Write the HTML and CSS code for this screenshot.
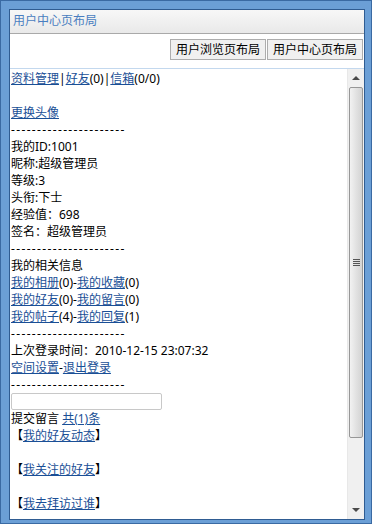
FILE: index.html
```html
<!DOCTYPE html>
<html lang="zh-CN">
<head>
<meta charset="utf-8">
<title>用户中心页布局</title>
<link rel="stylesheet" href="styles.css">
</head>
<body>
<div class="window">
  <div class="panel">
    <div class="header">用户中心页布局</div>
    <div class="toolbar">
      <button class="btn">用户浏览页布局</button>
      <button class="btn">用户中心页布局</button>
    </div>
    <div class="frame">
      <div class="content">
        <div class="line"><a href="#">资料管理</a>|<a href="#">好友</a>(0)|<a href="#">信箱</a>(0/0)</div>
        <div class="line"></div>
        <div class="line"><a href="#">更换头像</a></div>
        <div class="line dash">----------------------</div>
        <div class="line">我的ID:1001</div>
        <div class="line">昵称:超级管理员</div>
        <div class="line">等级:3</div>
        <div class="line">头衔:下士</div>
        <div class="line">经验值：698</div>
        <div class="line">签名：超级管理员</div>
        <div class="line dash">----------------------</div>
        <div class="line">我的相关信息</div>
        <div class="line"><a href="#">我的相册</a>(0)-<a href="#">我的收藏</a>(0)</div>
        <div class="line"><a href="#">我的好友</a>(0)-<a href="#">我的留言</a>(0)</div>
        <div class="line"><a href="#">我的帖子</a>(4)-<a href="#">我的回复</a>(1)</div>
        <div class="line dash">----------------------</div>
        <div class="line">上次登录时间：2010-12-15 23:07:32</div>
        <div class="line"><a href="#">空间设置</a>-<a href="#">退出登录</a></div>
        <div class="line dash">----------------------</div>
        <div class="line"><input class="msg" type="text"></div>
        <div class="line">提交留言 <a href="#">共(1)条</a></div>
        <div class="line">【<a href="#">我的好友动态</a>】</div>
        <div class="line"></div>
        <div class="line">【<a href="#">我关注的好友</a>】</div>
        <div class="line"></div>
        <div class="line">【<a href="#">我去拜访过谁</a>】</div>
      </div>
      <div class="scrollbar">
        <div class="arrow up"></div>
        <div class="thumb"><span class="grip"></span></div>
        <div class="track"></div>
        <div class="arrow down"></div>
      </div>
    </div>
  </div>
</div>
</body>
</html>
```

FILE: styles.css
```css
* { box-sizing: border-box; }
html, body { margin: 0; padding: 0; }
body {
  font-family: "Noto Sans", "Noto Sans CJK SC", sans-serif;
  font-size: 12px;
  color: #000;
}
.window {
  width: 372px;
  height: 524px;
  background: #6b9fd6;
  border: 1px solid #3a6aa3;
  padding: 8px 6px 3px 8px;
}
.panel {
  height: 100%;
  background: #fff;
  border: 1px solid #2f5c92;
  display: flex;
  flex-direction: column;
}
.header {
  height: 24px;
  background: linear-gradient(#f7f7f7, #e9e9e9);
  border-bottom: 1px solid #a9a9a9;
  color: #4a7ec0;
  padding-left: 3px;
  line-height: 22px;
}
.toolbar {
  height: 34px;
  display: flex;
  justify-content: flex-end;
  align-items: flex-start;
  gap: 1px;
  padding: 5px 1px 0 0;
}
.btn {
  font: inherit;
  color: #000;
  height: 21px;
  width: 96px;
  padding: 0;
  background: #f0f0f0;
  border: 1px solid #adadad;
  border-radius: 0;
  line-height: 18px;
}
.frame {
  flex: 1;
  display: flex;
  border-top: 1px solid #c3d8ee;
  min-height: 0;
}
.content {
  flex: 1;
  padding: 1px 0 0 1px;
  overflow: hidden;
}
.line {
  height: 17px;
  line-height: 17px;
  white-space: nowrap;
}
.dash { letter-spacing: 1.35px; }
a { color: #1a4f96; text-decoration: underline; }
.msg {
  display: block;
  width: 151px;
  height: 17px;
  margin: 0;
  border: 1px solid #c8c8c8;
  border-radius: 2px;
  padding: 0;
  background: #fff;
}
.scrollbar {
  width: 17px;
  background: #f0f0f0;
  border-left: 1px solid #e8e8e8;
  display: flex;
  flex-direction: column;
}
.arrow {
  height: 18px;
  display: flex;
  align-items: center;
  justify-content: center;
}
.arrow.up::before {
  content: "";
  border-left: 4px solid transparent;
  border-right: 4px solid transparent;
  border-bottom: 4px solid #4a4a4a;
}
.arrow.down::before {
  content: "";
  border-left: 4px solid transparent;
  border-right: 4px solid transparent;
  border-top: 4px solid #4a4a4a;
}
.thumb {
  height: 351px;
  margin: 0 1px;
  border: 1px solid #979797;
  border-radius: 2px;
  background: linear-gradient(90deg, #f2f2f2, #e2e2e2 50%, #d3d3d3);
  display: flex;
  align-items: center;
  justify-content: center;
}
.grip {
  width: 7px;
  height: 7px;
  background: repeating-linear-gradient(#555 0 1px, transparent 1px 2px);
}
.track { flex: 1; }
```
